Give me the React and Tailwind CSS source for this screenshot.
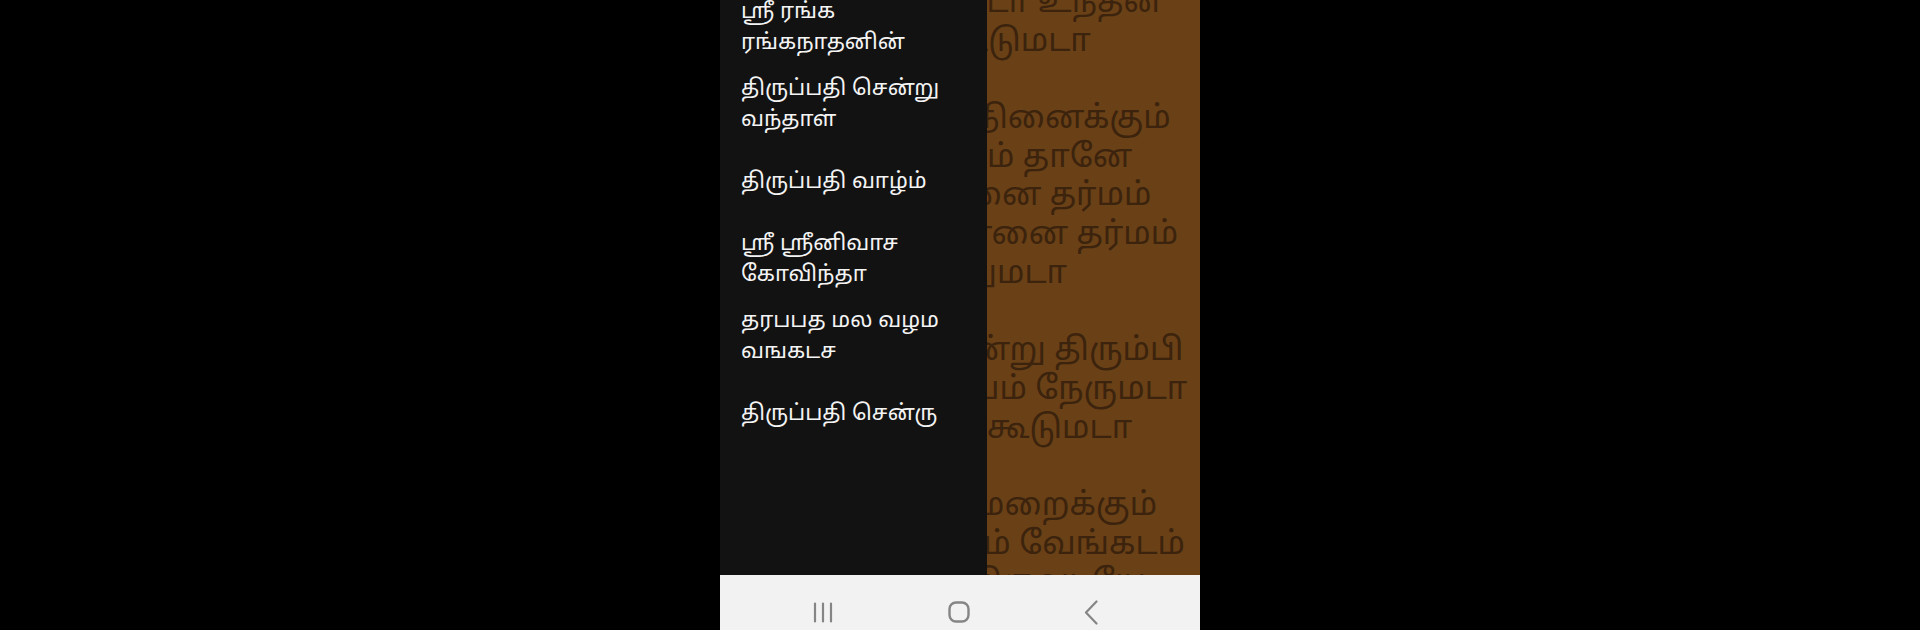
import React from "react";

const tamil = { fontFamily: '"Noto Sans Tamil", "Noto Sans", "Lohit Tamil", sans-serif' };

const lyrics = [
  "அருளே கிட்டுமடா உந்தன்",
  "ஆசைகளும் கூடுமடா",
  "",
  "நல்லதை நாட நினைக்கும்",
  "மனதில் எல்லாம் தானே",
  "காத்திடும், தானை தர்மம்",
  "காத்திடும், உன்னை தர்மம்",
  "அவனை காத்துமடா",
  "",
  "“திருப்பதி, சென்று திரும்பி",
  "வந்தால் திருப்பம் நேருமடா",
  "உன், விருப்பம் கூடுமடா",
  "",
  "பாவம் யாவும், மறைக்கும்",
  "உள்ளம் எல்லாம் வேங்கடம்",
  "வேங்கடேசன் திருவடியே",
];

const menu = [
  ["ஸ்ரீ ரங்க", "ரங்கநாதனின்"],
  ["திருப்பதி சென்று", "வந்தாள்"],
  ["திருப்பதி வாழ்ம்"],
  ["ஸ்ரீ ஸ்ரீனிவாச", "கோவிந்தா"],
  ["தரபபத மல வழம", "வஙகடச"],
  ["திருப்பதி சென்ரு"],
];

export default function App() {
  return (
    <div className="w-full h-[630px] bg-black flex justify-center overflow-hidden">
      <div className="w-[480px] h-full flex flex-col">
        {/* screen */}
        <div className="relative h-[575px] overflow-hidden bg-[#6a4016]">
          <div className="-mt-[15px] pl-[16px] text-[32px] leading-[38.7px] text-[#3b230d] whitespace-nowrap" style={tamil}>
            {lyrics.map((l, i) => (
              <div key={i} className="h-[38.7px]">{l}</div>
            ))}
          </div>

          {/* navigation drawer */}
          <div className="absolute left-0 top-0 bottom-0 w-[267px] bg-[#121212] overflow-hidden">
            <div className="-mt-[11px]">
              {menu.map((item, i) => (
                <div key={i} className="h-[77.4px] flex flex-col justify-center pl-[21px] text-[22px] leading-[31px] text-[#f4f4f4]" style={tamil}>
                  {item.map((t, j) => (
                    <span key={j} className="whitespace-nowrap">{t}</span>
                  ))}
                </div>
              ))}
            </div>
          </div>
        </div>

        {/* system nav bar */}
        <div className="flex-1 bg-[#f2f2f2] flex items-center justify-between pl-[93px] pr-[102px] pt-[19px]">
          <svg width="20" height="21" viewBox="0 0 20 21" className="text-[#858585]">
            <path d="M2 1.5v18M10 1.5v18M18 1.5v18" stroke="currentColor" strokeWidth="2.2" strokeLinecap="round" />
          </svg>
          <svg width="22" height="22" viewBox="0 0 22 22" className="text-[#858585]">
            <rect x="1.5" y="1.5" width="19" height="19" rx="6.5" fill="none" stroke="currentColor" strokeWidth="2.4" />
          </svg>
          <svg width="14" height="25" viewBox="0 0 14 25" className="text-[#858585]">
            <path d="M12.5 1.5L2 12.5l10.5 11" fill="none" stroke="currentColor" strokeWidth="2.2" strokeLinecap="round" strokeLinejoin="round" />
          </svg>
        </div>
      </div>
    </div>
  );
}
